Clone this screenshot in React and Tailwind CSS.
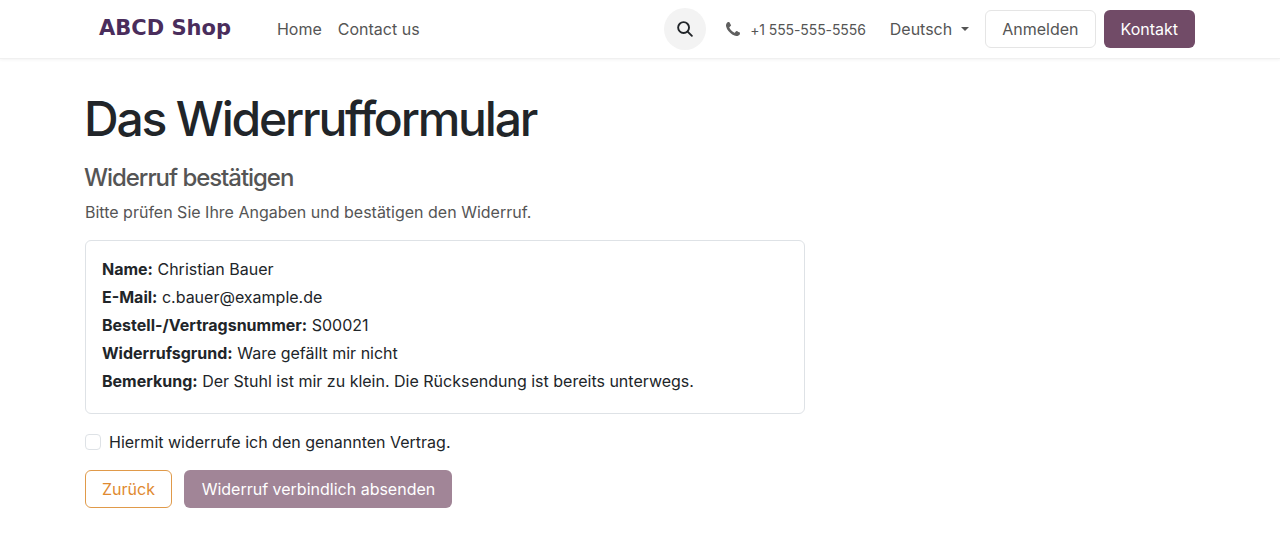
import React from "react";

function Phone() {
  return (
    <svg width="14" height="14" viewBox="0 0 1408 1408" fill="#5f5f5f"><path d="M1408 1112q0 27-10 70.500t-21 68.500q-21 50-122 106-94 51-186 51-27 0-53-3.500t-57.500-12.500-47-14.500-55.500-20.500-49-18q-98-35-175-83-127-79-264-216t-216-264q-48-77-83-175-3-9-18-49t-20.500-55.500-14.500-47-12.500-57.500-3.500-53q0-92 51-186 56-101 106-122 25-11 68.500-21t70.500-10q14 0 21 3 18 6 53 76 11 19 30 54t35 63.500 31 53.500q3 4 17.500 25t21.500 35.500 7 28.500q0 20-28.500 50t-62 55-62 53-28.500 46q0 9 5 22.500t8.500 20.500 14 24 11.500 19q76 137 174 235t235 174q2 1 19 11.500t24 14 20.500 8.500 22.500 5q18 0 46-28.500t53-62 55-62 50-28.500q14 0 28.500 7t35.500 21.500 25 17.500q25 15 53.500 31t63.500 35 54 30q70 35 76 53 3 7 3 21z"/></svg>
  );
}

function Search() {
  return (
    <svg width="16" height="16" viewBox="0 0 17 17" fill="none" stroke="#212529" strokeWidth="2" strokeLinecap="round"><circle cx="7" cy="7" r="5.800"/><path d="M11.300 11.300L15.800 15.800"/></svg>
  );
}

export default function App() {
  return (
    <div className="min-h-[549px] bg-white font-['Inter',sans-serif] text-[16px] text-[#212529]">
      <header className="h-[59px] border-b border-[#f0f0f0] shadow-[0_1px_3px_rgba(0,0,0,0.05)] flex items-center pl-[99px] pr-[85px]">
        <span className="font-['DejaVu_Sans',sans-serif] font-bold text-[21px] text-[#4a2d5c] mr-[46px]">ABCD Shop</span>
        <nav className="flex gap-4 text-[#555]">
          <span>Home</span>
          <span>Contact us</span>
        </nav>
        <div className="ml-auto flex items-center">
          <span className="w-[42px] h-[42px] rounded-full bg-[#f3f3f3] flex items-center justify-center mr-[20px]"><Search /></span>
          <Phone />
          <span className="ml-[10px] text-[14px] tracking-[-0.1px] text-[#555] mr-[24px]">+1 555-555-5556</span>
          <span className="text-[#555]">Deutsch</span>
          <span className="ml-[9px] mr-[16px] w-0 h-0 border-x-[4px] border-x-transparent border-t-[4px] border-t-[#555]"></span>
          <span className="h-[38px] px-4 border border-[#e5e5e5] rounded-md flex items-center text-[#555] mr-2">Anmelden</span>
          <span className="h-[38px] px-[17px] rounded-md flex items-center bg-[#714b67] text-white">Kontakt</span>
        </div>
      </header>
      <main className="pl-[85px] w-[805px] box-content">
        <h1 className="text-[48px] leading-[58px] font-medium tracking-[-2.2px] -ml-px mt-[31px] mb-0">Das Widerrufformular</h1>
        <h2 className="text-[24px] leading-[29px] font-medium tracking-[-1.05px] text-[#555] -ml-px mt-[15px]">Widerruf bestätigen</h2>
        <p className="text-[#555] mt-[8px] leading-6">Bitte prüfen Sie Ihre Angaben und bestätigen den Widerruf.</p>
        <div className="mt-4 w-[720px] h-[174px] border border-[#dee2e6] rounded-md px-4 pt-[14px] leading-[28px]">
          <div><b className="font-bold">Name:</b> Christian Bauer</div>
          <div><b className="font-bold">E-Mail:</b> c.bauer@example.de</div>
          <div><b className="font-bold">Bestell-/Vertragsnummer:</b> S00021</div>
          <div><b className="font-bold">Widerrufsgrund:</b> Ware gefällt mir nicht</div>
          <div><b className="font-bold">Bemerkung:</b> Der Stuhl ist mir zu klein. Die Rücksendung ist bereits unterwegs.</div>
        </div>
        <div className="flex items-center mt-[16px] h-6">
          <span className="w-4 h-4 border border-[#dee2e6] rounded-[4px] mr-2"></span>
          <span>Hiermit widerrufe ich den genannten Vertrag.</span>
        </div>
        <div className="flex gap-3 mt-[16px]">
          <span className="h-[38px] px-4 border border-[#e09a4a] text-[#e08a30] rounded-md flex items-center">Zurück</span>
          <span className="h-[38px] w-[268px] rounded-md bg-[#a18597] text-white flex items-center justify-center pl-px">Widerruf verbindlich absenden</span>
        </div>
      </main>
    </div>
  );
}
